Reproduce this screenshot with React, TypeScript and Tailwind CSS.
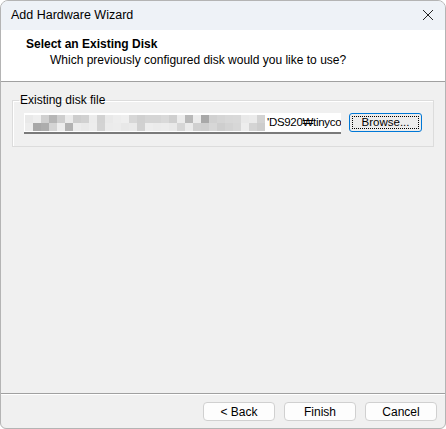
const uiFont = { fontFamily: '"Liberation Sans", "DejaVu Sans", Arial, sans-serif' };

// pixelated (blurred) part of the path
const shades: string[] = [];
let seed = 11;
for (let i = 0; i < 60; i++) {
    seed = (seed * 9301 + 49297) % 233280;
    const r = seed / 233280;
    const v = r < 0.15 ? 160 + Math.floor(r * 220) : r < 0.6 ? 200 + Math.floor(r * 30) : 222 + Math.floor(r * 18);
    shades.push(`rgb(${v},${v},${v})`);
}

const FooterButton = ({ label }: { label: string }) => (
    <button className="w-[72px] h-[19px] rounded-[4px] border border-[#d0d0d0] bg-[#fdfdfd] text-[12px] leading-none text-black">
        {label}
    </button>
);

export default function App() {
    return (
        <div className="w-[446px] h-[429px] bg-white" style={uiFont}>
            <div className="w-full h-full flex flex-col rounded-t-[8px] rounded-b-[6px] border border-[#b4b4b4] overflow-hidden bg-[#f0f0f0]">
                {/* Title bar */}
                <div className="h-[29px] shrink-0 flex items-center justify-between bg-[#eef2f7] pl-[10px] pr-[11px]">
                    <span className="text-[12.5px] text-black">Add Hardware Wizard</span>
                    <svg width="12" height="12" viewBox="0 0 12 12" className="mt-[-1px]">
                        <path d="M1 1 L11 11 M11 1 L1 11" stroke="#222" strokeWidth="1" />
                    </svg>
                </div>

                {/* Header */}
                <div className="h-[52px] shrink-0 bg-white border-b border-[#a0a0a0] pt-[6px] pl-[25px]">
                    <div className="text-[12px] leading-[16px] font-bold text-black">Select an Existing Disk</div>
                    <div className="text-[12px] leading-[16px] text-black pl-[24px]">Which previously configured disk would you like to use?</div>
                </div>

                {/* Body */}
                <div className="flex-1 px-[11px] pt-[10px]">
                    <fieldset className="border border-[#dcdcdc] shadow-[inset_1px_1px_0_#fff] pb-[12px]">
                        <legend className="ml-[6px] px-[1px] text-[12px] leading-[16px] text-black">Existing disk file</legend>
                        <div className="flex items-start pl-[11px] pt-[5px]">
                            <div className="w-[317px] h-[21px] bg-white border-b-2 border-[#7a7a7a] flex items-center overflow-hidden">
                                <div className="w-[240px] ml-[1px] grid grid-cols-[repeat(30,8px)] shrink-0">
                                    {shades.map((c, i) => (
                                        <div key={i} className="h-[8px]" style={{ backgroundColor: c }} />
                                    ))}
                                </div>
                                <span className="text-[11.5px] text-black whitespace-nowrap ml-[2px] tracking-[-0.3px]">'DS920₩tinyco</span>
                            </div>
                            <button className="ml-[8px] w-[73px] h-[19px] rounded-[3px] border border-[#0078d7] bg-[#ececec] p-[2px]">
                                <div className="w-full h-full border border-dotted border-black flex items-center justify-center text-[11.5px] leading-none text-black">
                                    Browse...
                                </div>
                            </button>
                        </div>
                    </fieldset>
                </div>

                {/* Footer */}
                <div className="h-[35px] shrink-0 border-t border-[#a0a0a0] shadow-[inset_0_1px_0_#fff] flex justify-end gap-[9px] pt-[8px] pr-[8px]">
                    <FooterButton label="< Back" />
                    <FooterButton label="Finish" />
                    <FooterButton label="Cancel" />
                </div>
            </div>
        </div>
    );
}
